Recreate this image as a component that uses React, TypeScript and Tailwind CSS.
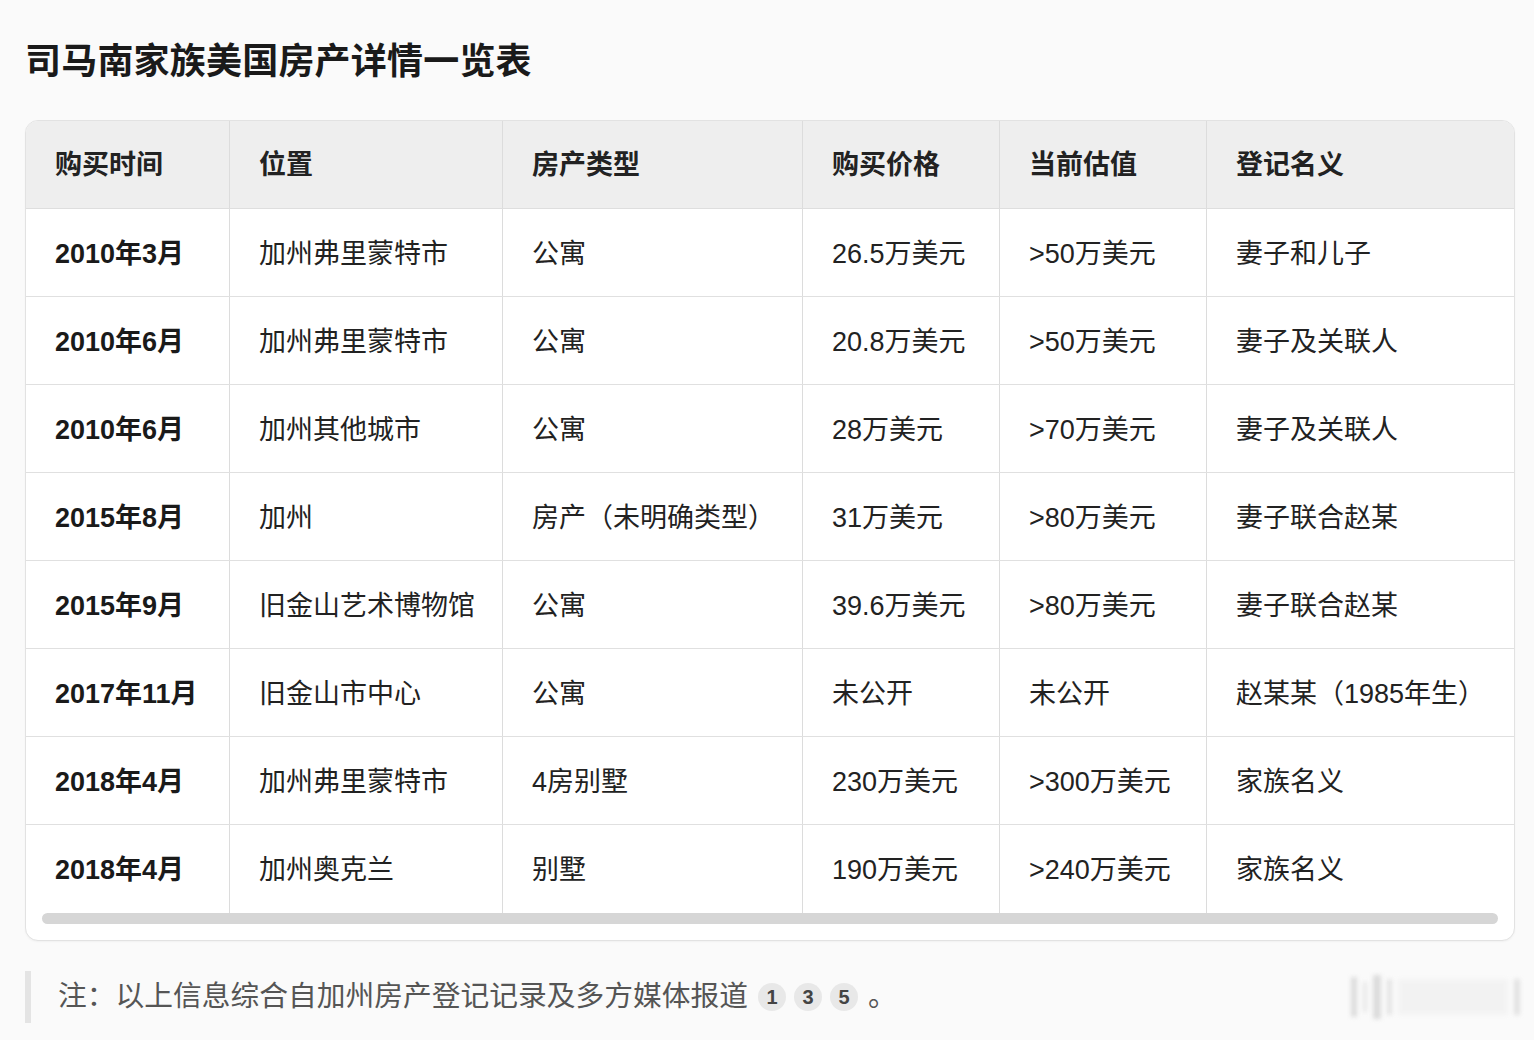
import React from "react";

const cols = ["w-[204px]", "w-[273px]", "w-[300px]", "w-[197px]", "w-[207px]", "w-[309px]"];

const header = ["购买时间", "位置", "房产类型", "购买价格", "当前估值", "登记名义"];

const rows: string[][] = [
  ["2010年3月", "加州弗里蒙特市", "公寓", "26.5万美元", ">50万美元", "妻子和儿子"],
  ["2010年6月", "加州弗里蒙特市", "公寓", "20.8万美元", ">50万美元", "妻子及关联人"],
  ["2010年6月", "加州其他城市", "公寓", "28万美元", ">70万美元", "妻子及关联人"],
  ["2015年8月", "加州", "房产（未明确类型）", "31万美元", ">80万美元", "妻子联合赵某"],
  ["2015年9月", "旧金山艺术博物馆", "公寓", "39.6万美元", ">80万美元", "妻子联合赵某"],
  ["2017年11月", "旧金山市中心", "公寓", "未公开", "未公开", "赵某某（1985年生）"],
  ["2018年4月", "加州弗里蒙特市", "4房别墅", "230万美元", ">300万美元", "家族名义"],
  ["2018年4月", "加州奥克兰", "别墅", "190万美元", ">240万美元", "家族名义"],
];

export default function App() {
  return (
    <div
      className="min-h-[1040px] w-[1534px] bg-[#fafafa] text-[#1f1f1f] overflow-hidden"
      style={{ fontFamily: '"Liberation Sans", "Noto Sans CJK SC", sans-serif' }}
    >
      <div className="pl-[25px] pt-[38px]">
        <h1 className="text-[36px] leading-[48px] font-bold text-[#1a1a1a] tracking-[0.2px]">
          司马南家族美国房产详情一览表
        </h1>
      </div>
      <div className="ml-[25px] mt-[34px] w-[1490px] rounded-[13px] border border-[#e2e2e2] bg-white overflow-hidden shadow-[0_1px_2px_rgba(0,0,0,0.04)]">
        <div className="flex h-[88px] bg-[#eeeeee] border-b border-[#dedede]">
          {header.map((h, i) => (
            <div
              key={i}
              className={`${cols[i]} shrink-0 flex items-center pl-[29px] pt-[2px] text-[27px] font-semibold text-[#222] ${i < 5 ? "border-r border-[#dcdcdc]" : ""}`}
            >
              {h}
            </div>
          ))}
        </div>
        {rows.map((r, ri) => (
          <div key={ri} className={`flex h-[88px] ${ri < rows.length - 1 ? "border-b border-[#e0e0e0]" : ""}`}>
            {r.map((c, i) => (
              <div
                key={i}
                className={`${cols[i]} shrink-0 flex items-center pl-[29px] pt-[3px] text-[27px] whitespace-nowrap ${i === 0 ? "font-bold text-[#1a1a1a]" : "text-[#222]"} ${i < 5 ? "border-r border-[#dcdcdc]" : ""}`}
              >
                {c}
              </div>
            ))}
          </div>
        ))}
        <div className="px-[16px] pb-[16px]">
          <div className="h-[11px] rounded-full bg-[#d6d6d6]" />
        </div>
      </div>
      <div className="mt-[30px] ml-[25px] flex items-center justify-between pr-[14px]">
        <div className="flex items-center border-l-[6px] border-[#e4e4e4] h-[52px] pl-[27px] text-[28.75px] text-[#555]">
          <span>注：以上信息综合自加州房产登记记录及多方媒体报道</span>
          <span className="ml-[10px] flex items-center gap-[8px]">
            {["1", "3", "5"].map((n) => (
              <span
                key={n}
                className="w-[28px] h-[28px] rounded-full bg-[#e8e8e8] text-[#444] text-[20px] font-semibold flex items-center justify-center"
              >
                {n}
              </span>
            ))}
          </span>
          <span className="ml-[10px]">。</span>
        </div>
        <div className="flex items-center gap-[6px] h-[46px] blur-[2px] opacity-70">
          <div className="w-[6px] h-[40px] bg-[#d0d0d0]" />
          <div className="w-[4px] h-[30px] bg-[#e0e0e0]" />
          <div className="w-[8px] h-[44px] bg-[#cfcfcf]" />
          <div className="w-[5px] h-[36px] bg-[#dadada]" />
          <div className="w-[110px] h-[36px] bg-[#f0f0f0]" />
          <div className="w-[6px] h-[36px] bg-[#d8d8d8]" />
        </div>
      </div>
    </div>
  );
}
